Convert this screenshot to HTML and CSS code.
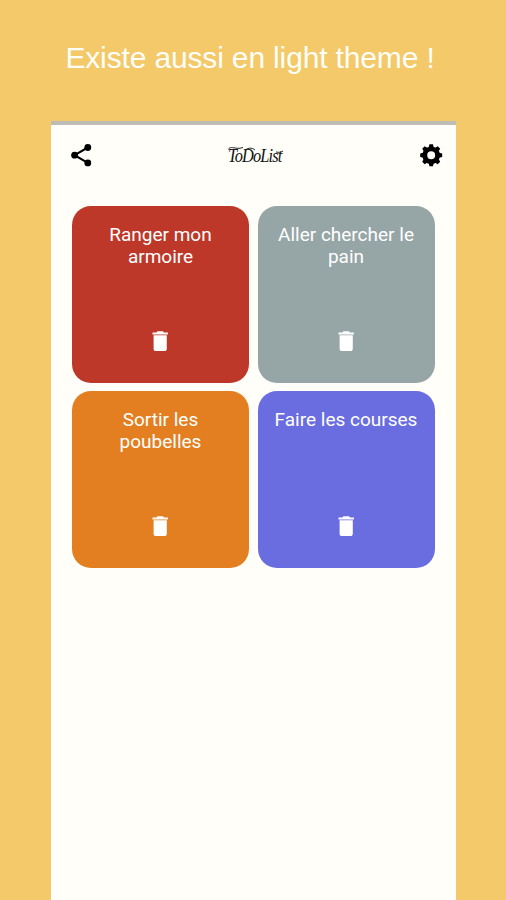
FILE: index.html
```html
<!DOCTYPE html>
<html lang="fr">
<head>
    <meta charset="UTF-8">
    <meta name="viewport" content="width=device-width, initial-scale=1.0">
    <title>ToDoList</title>
    <link rel="stylesheet" href="styles.css">
</head>
<body>
    <svg width="0" height="0" class="sprite">
        <symbol id="trash" viewBox="0 0 24 24">
            <path d="M6 19c0 1.100.9 2 2 2h8c1.100 0 2-.9 2-2V6.700H6V19zM19 4h-3.500l-1-1h-5l-1 1H5v2h14V4z"/>
        </symbol>
    </svg>

    <h1>Existe aussi en light theme !</h1>

    <div class="phone">
        <header class="toolbar">
            <svg class="icon" viewBox="0 0 24 24">
                <path d="M18 5L6 12l12 7" fill="none" stroke="#000" stroke-width="1.900"/>
                <circle cx="18" cy="5" r="3.100"/>
                <circle cx="6" cy="12" r="3.100"/>
                <circle cx="18" cy="19" r="3.100"/>
            </svg>
            <div class="logo">
                <span>ToDoList</span>
                <svg class="flourish" viewBox="0 0 56 20">
                    <path d="M1 4c-1-3 3-2.500 6-2s5 .5 8-.5M17 5c1-3 7-4 10-1"/>
                    <path d="M48 6c2 .5 5 .5 7-1"/>
                </svg>
            </div>
            <svg class="icon" viewBox="0 0 24 24">
                <circle cx="12" cy="12" r="5.800" fill="none" stroke="#000" stroke-width="4.400"/>
                <g id="teeth">
                    <path d="M9.700 5l.7-3h3.200l.7 3zM9.700 19l.7 3h3.200l.7-3zM5 9.700l-3 .7v3.200l3 .7zM19 9.700l3 .7v3.200l-3 .7z"/>
                </g>
                <use href="#teeth" transform="rotate(45 12 12)"/>
            </svg>
        </header>

        <main class="tasks">
            <div class="task red">
                <p>Ranger mon armoire</p>
                <svg class="icon"><use href="#trash"/></svg>
            </div>
            <div class="task grey">
                <p>Aller chercher le pain</p>
                <svg class="icon"><use href="#trash"/></svg>
            </div>
            <div class="task orange">
                <p>Sortir les poubelles</p>
                <svg class="icon"><use href="#trash"/></svg>
            </div>
            <div class="task blue">
                <p>Faire les courses</p>
                <svg class="icon"><use href="#trash"/></svg>
            </div>
        </main>
    </div>
</body>
</html>
```

FILE: styles.css
```css
* {
    box-sizing: border-box;
}
body {
    margin: 0;
    height: 900px;
    display: flex;
    flex-direction: column;
    overflow: hidden;
    background-color: #f3c969;
    font-family: Roboto, sans-serif;
}
.sprite {
    display: none;
}
h1 {
    margin: 0;
    height: 121px;
    padding: 40px 6px 0 0;
    font-family: "Liberation Sans", Arial, sans-serif;
    font-size: 30px;
    font-weight: normal;
    line-height: 36px;
    letter-spacing: -0.15px;
    text-align: center;
    color: #fffef8;
}
.phone {
    flex: 1;
    width: 405px;
    margin-left: 51px;
    border-top: 4px solid #bdbdb5;
    background-color: #fffef8;
}
.toolbar {
    display: flex;
    align-items: center;
    justify-content: space-between;
    height: 61px;
    padding: 0 12px 0 17px;
}
.icon {
    display: block;
    width: 26.4px;
    height: 26.4px;
}
.logo {
    position: relative;
    width: 56px;
    margin-right: 1px;
    font-family: "Liberation Serif", serif;
    font-size: 19px;
    font-style: italic;
    line-height: 20px;
    letter-spacing: -1px;
    color: #111;
}
.logo span {
    display: inline-block;
    transform: scaleX(0.86);
    transform-origin: left;
}
.flourish {
    position: absolute;
    top: 0;
    left: 0;
    width: 56px;
    height: 20px;
    fill: none;
    stroke: #222;
    stroke-width: 1;
}
.tasks {
    display: grid;
    grid-template-columns: 177px 177px;
    gap: 8px 8.5px;
    padding: 20px 21px;
}
.task {
    display: flex;
    flex-direction: column;
    align-items: center;
    justify-content: space-between;
    height: 177px;
    padding: 18px 16px 29px;
    border-radius: 19px;
    color: #fff;
}
.task:nth-child(n+3) {
    padding-bottom: 28.5px;
}
.task p {
    margin: 0;
    font-size: 19px;
    line-height: 22px;
    text-align: center;
}
.task .icon {
    fill: #fff;
}
.red {
    background-color: #be382a;
}
.grey {
    background-color: #96a5a6;
}
.orange {
    background-color: #e47f21;
}
.blue {
    background-color: #6a6de0;
}
```
